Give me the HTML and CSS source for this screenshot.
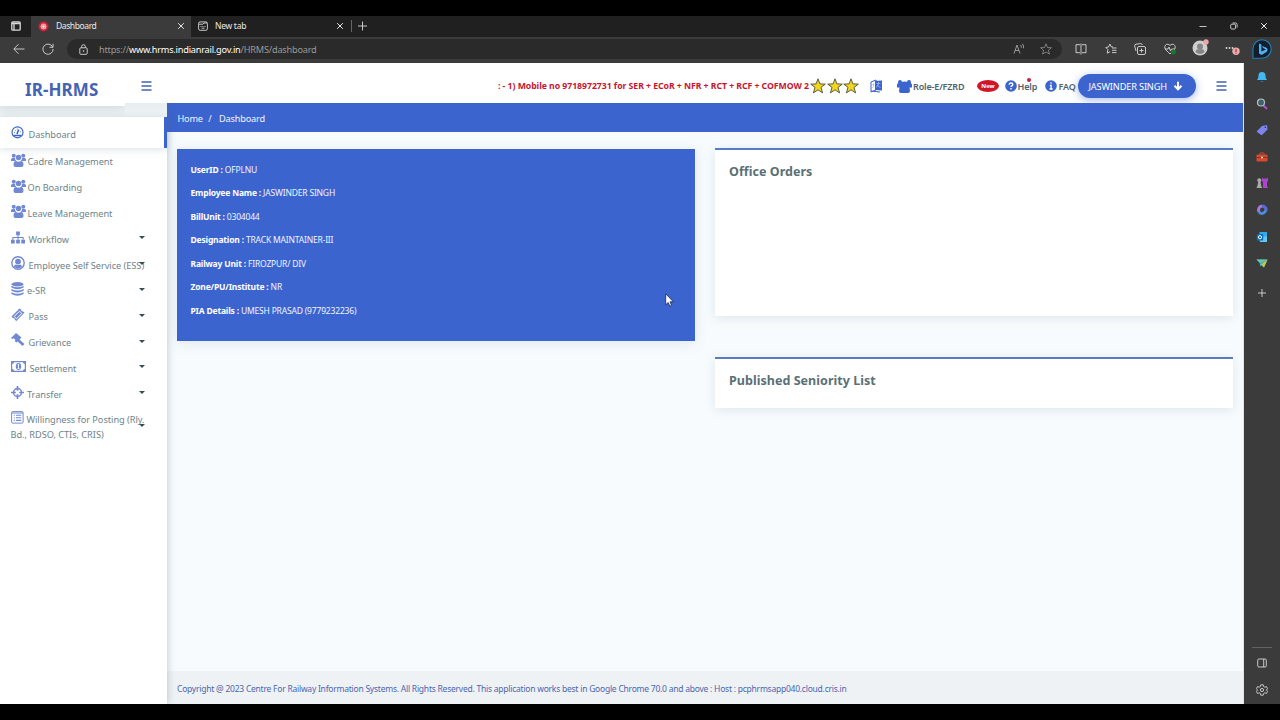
FILE: index.html
```html
<!DOCTYPE html>
<html lang="en">
<head>
<meta charset="utf-8">
<title>Dashboard</title>
<link rel="stylesheet" href="styles.css">
</head>
<body>
<svg class="defs" aria-hidden="true">
  <symbol id="users" viewBox="0 0 30 28"><circle cx="5.500" cy="5.500" r="4"/><circle cx="24.500" cy="5.500" r="4"/><circle cx="15" cy="9" r="5.400"/><path d="M0 15v-2q0-3 3-3h5q0 4 2.500 6H2q-2 0-2-1zM30 15v-2q0-3-3-3h-5q0 4-2.500 6H28q2 0 2-1zM5 24q0-8 5-8 5 2.500 10 0 5 0 5 8 0 4-4 4H9q-4 0-4-4z"/></symbol>
  <symbol id="menu" viewBox="0 0 11 10"><path d="M.5 1h10M.5 5h10M.5 9h10" fill="none" stroke="currentColor" stroke-width="1.300"/></symbol>
  <symbol id="x" viewBox="0 0 8 8"><path d="M1.200 1.200l5.600 5.600M6.800 1.200L1.200 6.800" fill="none" stroke="currentColor"/></symbol>
  <symbol id="star" viewBox="0 0 16 16"><path d="M8 .8l1.900 5.100 5.400.2-4.300 3.300 1.600 5.500L8 11.800l-4.600 3.100L5 9.400.7 6.100l5.400-.2z" fill="#f2d51e" stroke="#4b4d3c" stroke-width=".9"/></symbol>
</svg>
<div class="window">
  <div class="tabs">
    <div class="tabs-icon"><svg width="10" height="10" viewBox="0 0 10 10"><path d="M1.800.8h6.400q1 0 1 1v6.400q0 1-1 1H1.800q-1 0-1-1V1.800q0-1 1-1zM3 3v6M1 2.500h8" class="line bold"/></svg></div>
    <div class="tab active">
      <svg width="11" height="11" viewBox="0 0 11 11"><circle cx="5.500" cy="5.500" r="5" fill="#cf2138"/><circle cx="5.500" cy="5.500" r="2.600" fill="#ef8790" stroke="#fbd0d2" stroke-width=".7"/><circle cx="5.500" cy="5.500" r="1" fill="#fff"/></svg>
      <span class="tab-title wide">Dashboard</span><svg class="close"><use href="#x"/></svg>
    </div>
    <div class="tab">
      <svg width="10" height="10" viewBox="0 0 10 10"><rect x=".6" y=".9" width="8.800" height="8.400" rx="1.500" class="line"/><path d="M1 3.200h4l1-1.200h3M2.500 5.500h1M4.500 5.500h1M6.500 5.500h1M3.500 7.200h3" class="line"/></svg>
      <span class="tab-title">New tab</span><svg class="close"><use href="#x"/></svg>
    </div>
    <svg class="plus" viewBox="0 0 17 12"><path d="M.5 0v12" stroke="#666"/><path d="M11.500 1.500v9M7 6h9" class="line"/></svg>
    <div class="win-controls">
      <svg width="8" height="8" viewBox="0 0 8 8"><path d="M.5 4.500h7" class="line"/></svg>
      <svg width="8" height="8" viewBox="0 0 8 8"><rect x=".7" y="2.200" width="4.800" height="4.800" rx="1" class="line"/><path d="M2.500 1h3q1.600 0 1.600 1.600v3" class="line"/></svg>
      <svg width="8" height="8"><use href="#x"/></svg>
    </div>
  </div>
  <div class="browser">
    <div class="left">
      <div class="toolbar">
        <svg class="back" width="12" height="12" viewBox="0 0 12 12"><path d="M11.500 6H1M5.500 1.200L.8 6l4.700 4.800" class="line"/></svg>
        <svg class="reload" width="12" height="12" viewBox="0 0 12 12"><path d="M10.700 4.200A5.100 5.100 0 1 0 11.100 6M11 .8v3.500H7.500" class="line"/></svg>
        <div class="address">
          <svg width="9" height="11" viewBox="0 0 9 11"><rect x=".8" y="3.800" width="7.400" height="6.500" rx="1" class="line"/><path d="M2.700 3.800V2.500a1.800 1.800 0 0 1 3.600 0v1.300" class="line"/><circle cx="4.500" cy="7" r=".8" fill="#ddd"/></svg>
          <span class="url">https://<b>www.hrms.indianrail.gov.in</b>/HRMS/dashboard</span>
          <svg class="read" width="12" height="12" viewBox="0 0 12 12"><path d="M1 10.500L4 2l3 8.500M2 7.500h4M7.500 2q1 1 .8 2.700M9.500.8q1.500 2 .9 4.500" class="line dim"/></svg>
          <svg class="fav" width="12" height="12" viewBox="0 0 16 16"><path d="M8 1l2 5 5.200.3-4 3.300 1.400 5.200L8 12l-4.600 2.800 1.400-5.200-4-3.300L6 6z" class="line dim"/></svg>
        </div>
        <div class="tools">
          <svg width="12" height="12" viewBox="0 0 12 12"><path d="M5 1.700H1v8h4M7 1.700h4v8H7M6 .5v11" class="line"/></svg>
          <svg width="12" height="12" viewBox="0 0 12 12"><path d="M8 4L6.200 3.800 4.900 1 3.500 4 .8 4.500l2 2-.5 3.700 2.700-1.500M7 5h4.500M7 7.300h4.500M7 9.600h4.500" class="line"/></svg>
          <svg width="12" height="12" viewBox="0 0 12 12"><rect x="3.500" y="3.500" width="8" height="8" rx="1.500" class="line"/><path d="M2 8L.7 3.200Q.3 1.500 2 1.200L6.500.6Q8 .5 8.300 2M7.500 5.500v4M5.500 7.500h4" class="line"/></svg>
          <svg width="12" height="12" viewBox="0 0 12 12"><path d="M6 11L1.600 6.600C-1 3 3-.8 6 2.500 9-.8 13 3 10.400 6.600zM1 6h3l1-2 1.500 4 1-2h3" class="line"/><circle cx="9.500" cy="9" r="2.500" fill="#16772b"/></svg>
          <svg class="avatar" width="17" height="17" viewBox="0 0 17 17"><circle cx="8" cy="9" r="7.500" fill="#cfcfcf"/><circle cx="8" cy="7.500" r="3" fill="#858585"/><path d="M3.500 13q0-3 4.500-3t4.500 3Q8 17 3.500 13z" fill="#858585"/><circle cx="14" cy="3" r="2.700" fill="#eda6a5"/></svg>
          <svg class="more" width="15" height="12" viewBox="0 0 15 12"><g fill="#ddd"><circle cx="1.500" cy="5" r=".9"/><circle cx="4.500" cy="5" r=".9"/><circle cx="7.500" cy="5" r=".9"/></g><circle cx="11" cy="8.200" r="3.700" fill="#f0a8aa"/><path d="M11 6v3M11 9.700v1" stroke="#632" stroke-width="1"/></svg>
        </div>
      </div>
      <div class="page">
        <header class="header">
          <div class="brand">IR-HRMS</div>
          <svg class="burger"><use href="#menu"/></svg>
          <div class="notice">: - 1) Mobile no 9718972731 for SER + ECoR + NFR + RCT + RCF + COFMOW 2</div>
          <div class="stars"><svg><use href="#star"/></svg><svg><use href="#star"/></svg><svg><use href="#star"/></svg></div>
          <svg class="lang" width="13" height="14" viewBox="0 0 13 14"><path d="M1 3l5-2v10l-5 2z" fill="#fff" stroke="#3c64cf"/><path d="M5 2l7-.5v10L5 11z" fill="#3c64cf"/><path d="M1 12l9 1" stroke="#3c64cf"/><path d="M2.300 5.500h2M3.500 4.500v3L2.300 9M6.500 4.500h4M8.500 3v2l-2 3.500M7.500 6l3 3" stroke="#a5b8ec" stroke-width=".8" fill="none"/></svg>
          <svg class="role-icon" width="15" height="13" viewBox="0 0 30 26"><circle cx="6" cy="4" r="4"/><circle cx="24" cy="4" r="4"/><path d="M2 6q13-6 26 0l2 3v6h-5l1 7q0 4-4 4H8q-4 0-4-4l1-7H0V9z"/></svg>
          <span class="role">Role-E/FZRD</span>
          <span class="new">New</span>
          <svg class="round" viewBox="0 0 12 12"><circle cx="6" cy="6" r="5.800"/><path d="M4.200 4.700q0-1.700 1.800-1.700t1.800 1.500q0 1-1.100 1.500-.7.300-.7 1M6 8v1.400" stroke="#fff" stroke-width="1.400" fill="none"/></svg>
          <span class="help">Help<i></i></span>
          <svg class="round info" viewBox="0 0 12 12"><circle cx="6" cy="6" r="5.800"/><path d="M4.800 5.300h1.300v3.500M4.500 9h3.200M6 2.300v1.500" stroke="#fff" stroke-width="1.300" fill="none"/></svg>
          <span class="faq">FAQ</span>
          <div class="user-btn"><span>JASWINDER SINGH</span><svg width="10" height="10" viewBox="0 0 10 10"><path d="M5 .8v7M1.500 4.800L5 8.300l3.500-3.500" fill="none" stroke="#fff" stroke-width="2"/></svg></div>
          <svg class="burger right"><use href="#menu"/></svg>
        </header>
        <div class="body">
          <nav class="side">
            <div class="item current"><svg class="ic" width="13" height="13" viewBox="0 0 13 13"><circle cx="6.500" cy="6.300" r="5.500" fill="#fff" stroke="#3c64cf" stroke-width="1.200"/><path d="M2.700 9.500h7.600M6 8l1.700-4.500" stroke="#3c64cf" stroke-width="1.600"/><path d="M3 6.500h1M4 4l.7.700M6.300 2.500v1M9 5.800h1" stroke="#3c64cf" stroke-width=".8"/></svg><span>Dashboard</span></div>
            <div class="item tight"><svg class="ic people"><use href="#users"/></svg><span>Cadre Management</span></div>
            <div class="item tight"><svg class="ic people"><use href="#users"/></svg><span>On Boarding</span></div>
            <div class="item tight"><svg class="ic people"><use href="#users"/></svg><span>Leave Management</span></div>
            <div class="item flow"><svg class="ic" width="14" height="13" viewBox="0 0 15 13"><path d="M5.500 0h4v4h-4zM0 9h4v4H0zM5.500 9h4v4h-4zM11 9h4v4h-4z"/><path d="M7.500 4v5M2 9V6.500h11V9" fill="none" stroke="#7189d3" stroke-width="1.200"/></svg><span>Workflow</span><i class="caret"></i></div>
            <div class="item"><svg class="ic" width="14" height="14" viewBox="0 0 14 14"><circle cx="7" cy="7" r="6.900"/><circle cx="7" cy="7" r="5.500" fill="#fff"/><circle cx="7" cy="5.600" r="2.900"/><path d="M2.800 10.500q1-2 2.200-2 2 1.200 4 0 1.200 0 2.200 2Q7 14.500 2.800 10.500z"/></svg><span>Employee Self Service (ESS)</span><i class="caret"></i></div>
            <div class="item tight esr"><svg class="ic" width="13" height="14" viewBox="0 0 13 14"><ellipse cx="6.500" cy="2.300" rx="6.100" ry="2.200"/><path d="M.4 3.800q6.100 3 12.200 0v1.700q-6.100 3.500-12.200 0zM.4 7q6.100 3 12.200 0v1.700q-6.100 3.500-12.200 0zM.4 10.200q6.100 3 12.200 0v1.700q-6.100 3.500-12.200 0z"/></svg><span>e-SR</span><i class="caret"></i></div>
            <div class="item"><svg class="ic" width="14" height="14" viewBox="0 0 14 14"><path d="M.5 8.500l8-8 1.500 1q0 2 2 2l1.500 1-8 8.500-1.500-1q0-2-2-2z"/><path d="M3.200 8.500L8.500 3.200l2.300 2.200-5.300 5.400z" fill="none" stroke="#fff"/></svg><span>Pass</span><i class="caret"></i></div>
            <div class="item"><svg class="ic" width="14" height="14" viewBox="0 0 14 14"><path d="M0 5L5 0l5.500 4.500-5 5-1.800-1.200.8-1.300-1.700-1.700-1.300.7z"/><path d="M6.500 6.500L12.500 12" stroke="#7189d3" stroke-width="2.800"/></svg><span>Grievance</span><i class="caret"></i></div>
            <div class="item settle"><svg class="ic" width="15" height="11" viewBox="0 0 15 11"><path d="M0 0h15v11H0z"/><path d="M3 1.300h9q0 1.500 1.800 1.700v5q-1.800.3-1.800 1.700H3Q3 8.300 1.200 8V3Q3 2.800 3 1.300z" fill="#fff"/><ellipse cx="7.500" cy="5.500" rx="2.700" ry="3.400"/><path d="M6.500 4l1-.8v4M6.500 7.500h2" fill="none" stroke="#fff" stroke-width=".9"/></svg><span>Settlement</span><i class="caret"></i></div>
            <div class="item tight"><svg class="ic" width="13" height="13" viewBox="0 0 13 13"><circle cx="6.500" cy="6.500" r="4" fill="none" stroke="#7189d3" stroke-width="1.500"/><path d="M6.500 0v4.800M6.500 8.200V13M0 6.500h4.800M8.200 6.500H13" stroke="#7189d3" stroke-width="1.700"/></svg><span>Transfer</span><i class="caret"></i></div>
            <div class="item last"><svg class="ic" width="13" height="13" viewBox="0 0 13 13"><rect x=".6" y=".6" width="11.500" height="11.500" rx="1" fill="none" stroke="#7189d3"/><path d="M1 2h11M2.800 4.200h1M5 4.200h5.300M2.800 6.800h1M5 6.800h5.300M2.800 9.400h1M5 9.400h5.300" stroke="#7189d3" stroke-width="1.100"/></svg><span>Willingness for Posting (Rly.</span><div class="second">Bd., RDSO, CTIs, CRIS)</div><i class="caret"></i></div>
          </nav>
          <main class="main">
            <div class="crumbs"><span>Home</span><span>/</span><span>Dashboard</span></div>
            <div class="cards">
              <section class="profile">
                <p><b>UserID :</b> OFPLNU</p>
                <p><b>Employee Name :</b> JASWINDER SINGH</p>
                <p><b>BillUnit :</b> 0304044</p>
                <p><b>Designation :</b> TRACK MAINTAINER-III</p>
                <p><b>Railway Unit :</b> FIROZPUR/ DIV</p>
                <p><b>Zone/PU/Institute :</b> NR</p>
                <p><b>PIA Details :</b> UMESH PRASAD (9779232236)</p>
                <svg class="cursor" width="9" height="14" viewBox="0 0 9 14"><path d="M.7.8v11l2.500-2.300 1.600 3.700 1.800-.8L5 8.800h3.400z" fill="#fff" stroke="#1b2548" stroke-width=".8"/></svg>
              </section>
              <div class="column">
                <section class="card orders"><h2>Office Orders</h2></section>
                <section class="card"><h2>Published Seniority List</h2></section>
              </div>
            </div>
            <footer class="footer"><span>Copyright @ 2023 Centre For Railway Information Systems. All Rights Reserved. This application works best in Google Chrome 70.0 and above : Host : pcphrmsapp040.cloud.cris.in</span></footer>
          </main>
        </div>
      </div>
    </div>
    <aside class="rail">
      <svg class="bing" width="20" height="20" viewBox="0 0 20 20"><path d="M10 .8a9.200 9.200 0 1 1 0 18.400H1V10A9 9 0 0 1 10 .8z" fill="#111f2c" stroke="#247db5" stroke-width="1.100"/><path d="M7 4.500l2.400.9v7l4.600-2-3-1.500-.8-2L15 9q1.500 2-.4 4L9.500 16 7 14.500z" fill="#50aef0"/></svg>
      <svg class="app" viewBox="0 0 12 12"><path d="M1 9q1.500-1 1.500-4.500a3.500 3.500 0 0 1 7 0Q9.500 8 11 9z" fill="#42b9ef"/><path d="M4.500 10h3q-1.500 2-3 0z" fill="#1a86c9"/></svg>
      <svg class="app" viewBox="0 0 12 12"><path d="M7 7l4 4" stroke="#b24ed0" stroke-width="2"/><circle cx="5" cy="4.500" r="3.500" fill="#42606b" stroke="#b3c0c3" stroke-width="1.200"/></svg>
      <svg class="app" viewBox="0 0 12 12"><path d="M1 7l5-5 5-1 .5 4.500-5 5q-1 1-2 0L1 8q-.5-.5 0-1z" fill="#7d84ee"/><circle cx="9.300" cy="3.300" r=".8" fill="#333"/></svg>
      <svg class="app" viewBox="0 0 12 12"><path d="M4 3.500V2h4v1.500" fill="none" stroke="#c54e32"/><rect x=".5" y="3.500" width="11" height="7" rx="1" fill="#d64b30"/><path d="M.5 6.500h11" stroke="#8e2e23"/><path d="M5 5.700h2v1.600H5z" fill="#f6d6ba"/></svg>
      <svg class="app" viewBox="0 0 12 12"><circle cx="3.300" cy="3.300" r="2" fill="#aaa"/><path d="M2.200 5h2.400l.6 4 1 2H.4l1-2z" fill="#aaa"/><path d="M6 1h1.500v1h1V1h1v1h1V1H12v3l-1 1v4l1 2H7V5L6 4z" fill="#ac45cc"/></svg>
      <svg class="app" viewBox="0 0 12 12"><path d="M6 2a4 4 0 0 0-3 6" fill="none" stroke="#a678d8" stroke-width="3"/><path d="M6 2q4 .5 4.300 4" fill="none" stroke="#596bd5" stroke-width="3"/><path d="M3 8q3.500 4 7.300-2" fill="none" stroke="#4c8ae6" stroke-width="2.800"/></svg>
      <svg class="app" viewBox="0 0 12 12"><rect x="3.500" y="1" width="7.500" height="9.500" fill="#35a9ea"/><path d="M4 7l7-2v6H4z" fill="#65c7f3"/><rect x=".8" y="3" width="6.400" height="6.400" rx=".7" fill="#0870bd"/><circle cx="4" cy="6.200" r="1.600" fill="none" stroke="#fff"/></svg>
      <svg class="app" viewBox="0 0 12 12"><path d="M.5 2.500h11L8 10.500 5.500 8.200 4 9.500 3.700 6z" fill="#41aabd"/><path d="M5 7.500l6.500-5L8 10.500z" fill="#c5c34c"/><path d="M.5 2.500h11L4 6z" fill="#68c6a1"/></svg>
      <svg class="app add" viewBox="0 0 12 12"><path d="M6 2v8M2 6h8" class="line"/></svg>
      <div class="rail-end">
        <svg width="10" height="10" viewBox="0 0 10 10"><rect x=".7" y="1" width="8.600" height="8" rx="1.200" class="line"/><path d="M6.700 1v8" class="line"/></svg>
        <svg width="12" height="12" viewBox="0 0 12 12"><path d="M4.800.8h2.400l.4 1.700 1.200.7 1.700-.6 1.100 2L10.400 6l1.200 1.400-1.100 2-1.700-.6-1.200.7-.4 1.700H4.800l-.4-1.700-1.200-.7-1.700.6-1.100-2L1.600 6 .4 4.600l1.100-2 1.700.6 1.200-.7z" class="line"/><circle cx="6" cy="6" r="1.600" class="line"/></svg>
      </div>
    </aside>
  </div>
</div>
</body>
</html>
```
FILE: styles.css
```css
* { box-sizing: border-box; }
body { margin: 0; background: #000; font-family: "Noto Sans", sans-serif; font-size: 9px; }
svg { display: block; flex: none; }
.defs { position: absolute; width: 0; height: 0; }
.line { fill: none; stroke: #d8d8d8; stroke-width: .9; }
.bold { stroke-width: 1.300; }
.dim { stroke: #a4a4a4; }
.window { height: 720px; padding: 16px 0; display: flex; flex-direction: column; }
.tabs { height: 21px; flex: none; display: flex; align-items: center; padding-bottom: 1px; background: #202020; color: #e8e8e8; }
.tabs-icon { width: 31px; padding-left: 11px; }
.tab { width: 160px; height: 21px; display: flex; align-items: center; padding: 0 7px; gap: 7px; margin-bottom: -1px; padding-bottom: 1px; }
.tab.active { background: #3b3b3b; gap: 7px; padding-right: 6px; }
.tab-title { flex: 1; font-size: 8.500px; letter-spacing: -.28px; line-height: 20px; white-space: nowrap; }
.tab-title.wide { letter-spacing: -.5px; letter-spacing: -.4px; }
.close { width: 8px; height: 8px; }
.plus { width: 17px; height: 12px; }
.win-controls { margin-left: auto; display: flex; gap: 22.500px; padding-right: 12px; color: #eee; }
.browser { flex: 1; min-height: 0; display: flex; background: #3b3b3b; }
.left { width: 1244px; flex: none; display: flex; flex-direction: column; }
.toolbar { height: 26px; flex: none; display: flex; align-items: center; padding-bottom: 2px; background: #3b3b3b; }
.back { margin-left: 13px; }
.reload { margin-left: 17px; }
.address { width: 995px; height: 20px; margin-left: 13px; border-radius: 10px; background: #2a2a2a; display: flex; align-items: center; padding: 0 10px 0 12px; }
.url { margin-left: 11px; flex: 1; font-size: 9.200px; letter-spacing: -.22px; color: #999; }
.url b { font-weight: 400; color: #fff; }
.fav { margin-left: 15px; }
.tools { display: flex; align-items: center; margin-left: 13px; gap: 17.500px; }
.avatar { margin: -3px -2px 0 -1px; }
.more { margin-left: 0; }
.page { flex: 1; min-height: 0; display: flex; flex-direction: column; background: #f7fbfe; border-right: 1px solid #dce5ea; overflow: hidden; }
.header { height: 40px; flex: none; display: flex; align-items: center; background: #fff; padding-top: 6px; position: relative; z-index: 3; }
.brand { width: 125px; height: 43px; flex: none; align-self: flex-start; margin-top: -6px; padding: 15px 0 0 25px; background: #fff; color: #4463b3; font-size: 17px; font-weight: 700; line-height: 24px; letter-spacing: .1px; box-shadow: 0 4px 9px rgba(95, 115, 130, .13); clip-path: inset(0 0 -12px 0); }
.burger { width: 11px; height: 10px; margin: -1px 0 0 16px; color: #4464b0; }
.notice { width: 312px; margin-left: 346px; color: #c8152e; font-size: 8.700px; font-weight: 700; letter-spacing: -.04px; white-space: nowrap; overflow: hidden; }
.stars { display: flex; gap: .5px; }
.stars svg { width: 16px; height: 16px; }
.lang { margin-left: 10.500px; }
.role-icon { margin-left: 14px; fill: #3c64cf; }
.role, .help, .faq { color: #4d626c; font-size: 9px; font-weight: 600; white-space: nowrap; letter-spacing: -.15px; line-height: 14px; flex: none; padding-top: 1px; }
.role { width: 63px; margin-left: 1.500px; }
.new { width: 22px; height: 12px; border-radius: 50%; margin-left: 1px; background: #cf1629; color: #fff; font-size: 6px; font-weight: 700; text-align: center; line-height: 12px; }
.round { width: 12px; height: 12px; margin: -1px 0 0 5.500px; fill: #3c64cf; }
.help { margin-left: 1px; width: 20px; position: relative; }
.help i { position: absolute; left: 9px; top: -1px; width: 4px; height: 4px; border-radius: 50%; background: #c9213c; }
.round.info { margin-left: 7px; }
.faq { margin-left: 2px; width: 19px; }
.user-btn { width: 118px; height: 24px; flex: none; border-radius: 12px; background: #3c64cf; color: #fff; display: flex; align-items: center; gap: 6px; padding: 0 0 0 11px; box-shadow: 0 2px 8px rgba(60, 100, 207, .45); font-size: 9.200px; letter-spacing: -.15px; white-space: nowrap; }
.burger.right { margin-left: 20px; }
.body { flex: 1; min-height: 0; display: flex; }
.side { width: 167px; flex: none; padding-top: 14px; background: linear-gradient(#e7edf0, #f1f5f7 14px, #fff 14px); box-shadow: 1px 0 7px rgba(80, 105, 125, .3); position: relative; z-index: 2; color: #6d838b; }
.item { height: 25.800px; display: flex; align-items: center; padding-left: 10.500px; gap: 4px; position: relative; font-size: 9.200px; letter-spacing: -.03px; white-space: nowrap; fill: #7189d3; }
.item.tight { gap: 2px; }
.item.flow { gap: 4px; }
.item.tight:not(:has(.people)) { gap: 3.500px; }
.item .ic { margin-bottom: 4px; min-width: 13px; }
.item .people { width: 15px; height: 14px; }
.item.current { height: 31px; border-right: 3px solid #3c64cf; margin-bottom: 1px; background: #fff; box-shadow: 0 1px 8px rgba(80, 105, 125, .22); gap: 5px; padding-top: 4px; }
.caret { position: absolute; right: 22px; top: 10px; border: 3px solid transparent; border-top-color: #374b51; border-bottom: 0; }
.item.last { height: 42px; flex-wrap: wrap; gap: 0 3px; align-content: flex-start; padding-top: 5px; line-height: 15px; }
.item.last .ic { margin: -3px 0 0; }
.item.last .caret { top: 17px; }
.second { width: 150px; }
.main { flex: 1; display: flex; flex-direction: column; min-width: 0; }
.crumbs { height: 29px; flex: none; background: #3c64cf; color: #f1f5ff; display: flex; align-items: center; padding: 1px 0 0 10.500px; gap: 5.500px; font-size: 9.200px; letter-spacing: -.2px; }
.crumbs span:last-child { margin-left: 2px; }
.cards { flex: 1; display: grid; grid-template-columns: 517.500px 518px; gap: 20.500px; padding: 16px 10px; align-items: start; }
.profile { margin-top: 1px; height: 191.500px; background: #3c64cf; color: #f0f4ff; padding: 8.500px 13.500px; position: relative; box-shadow: 0 2px 12px rgba(80, 105, 125, .15); }
.profile p { margin: 0; height: 23.550px; line-height: 23px; font-size: 8.500px; letter-spacing: -.18px; }
.profile b { color: #fff; }
.cursor { position: absolute; left: 488px; top: 143.500px; }
.column { display: flex; flex-direction: column; gap: 41px; }
.card { height: 50.500px; background: #fff; border-top: 2px solid #587bc4; box-shadow: 0 2px 10px rgba(80, 105, 125, .14); padding: 13px 14px; }
.card.orders { height: 168px; }
.card h2 { margin: 0; color: #5a7075; font-size: 12.500px; line-height: 18px; letter-spacing: .04px; }
.footer { height: 33px; flex: none; display: flex; align-items: center; padding: 1px 0 0 10px; background: #eff2f4; color: #4a66b0; font-size: 8.500px; letter-spacing: -.235px; white-space: nowrap; }
.rail { width: 36px; display: flex; flex-direction: column; align-items: center; background: #3b3b3b; padding-top: 2px; }
.bing { margin: 0 0 12px; }
.app { width: 12px; height: 12px; margin-bottom: 14.600px; }
.add { margin-top: 3px; }
.rail-end { width: 20px; margin-top: auto; border-top: 1px solid #626262; display: flex; flex-direction: column; align-items: center; gap: 16px; padding: 10px 0 8px; }
```
